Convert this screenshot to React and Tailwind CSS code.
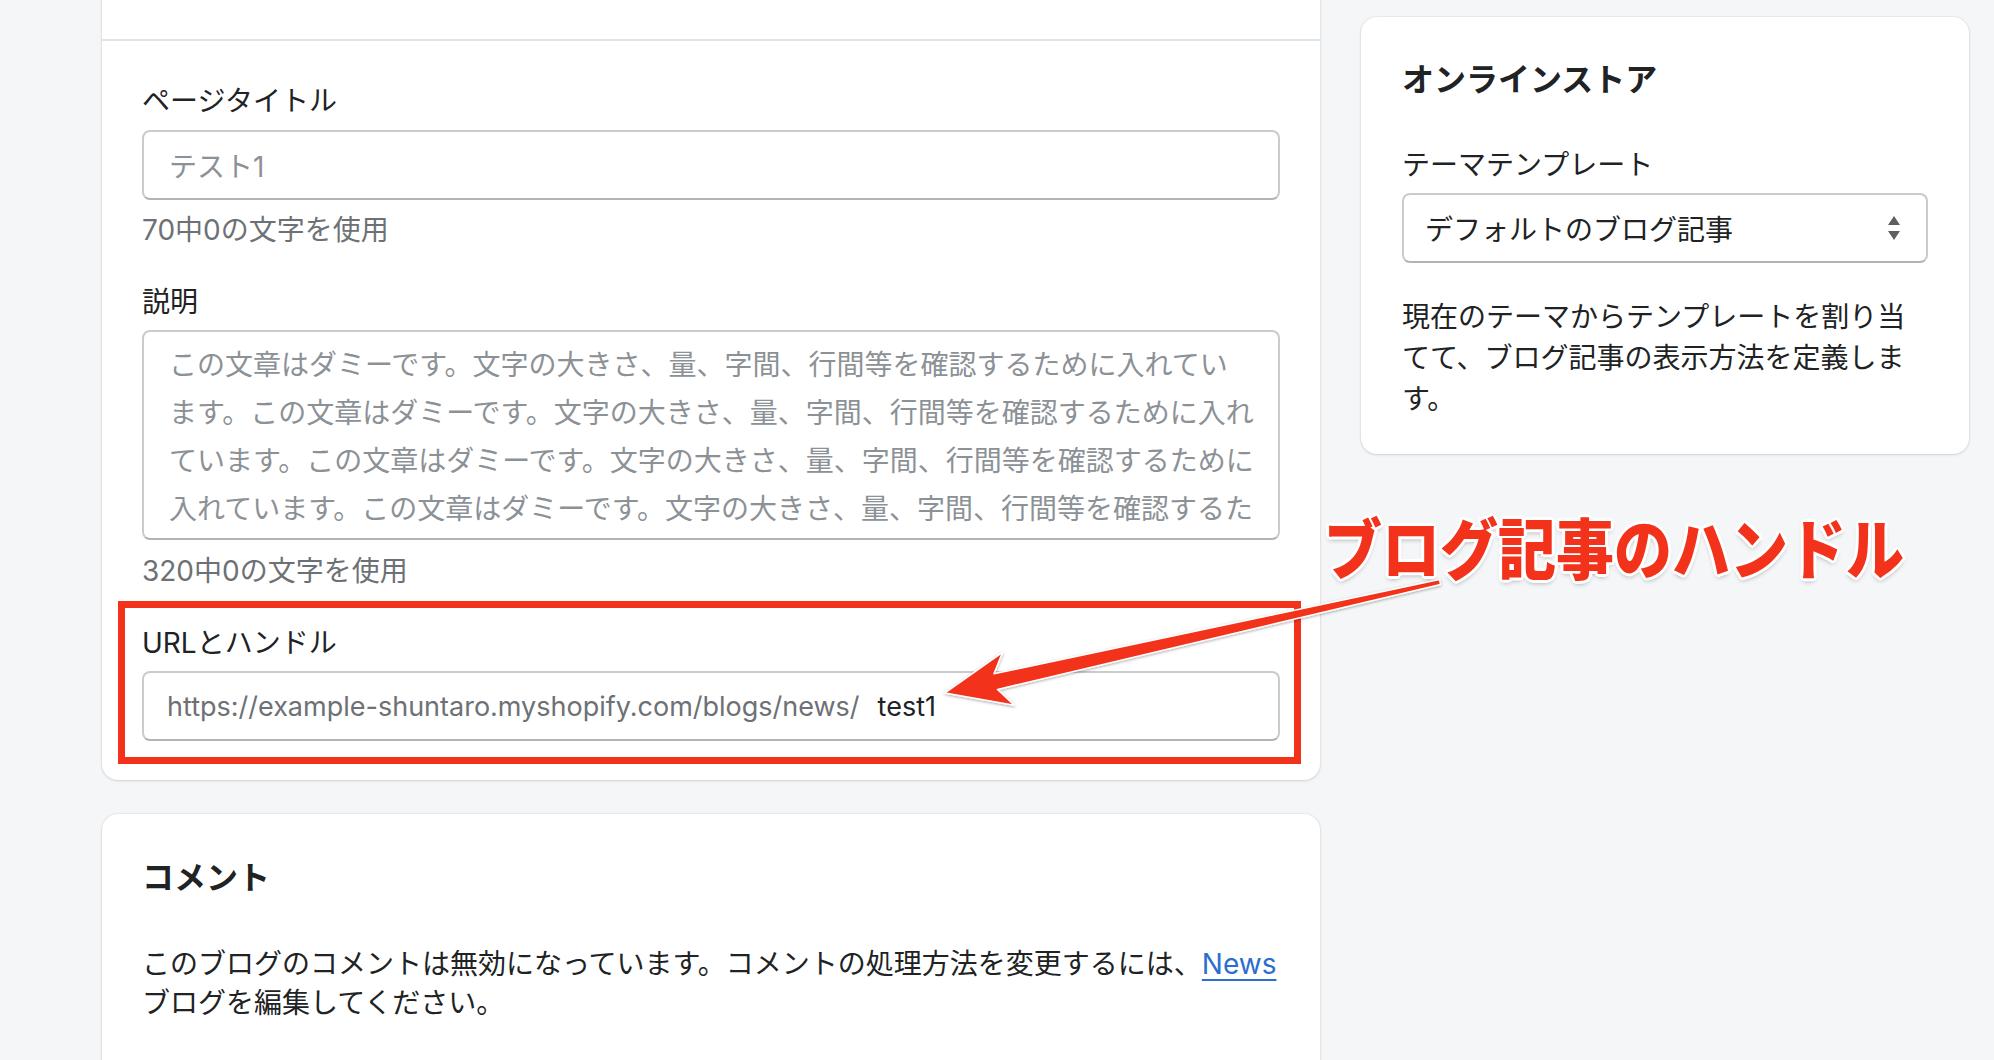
const font = "font-['Inter','Noto_Sans_CJK_JP',sans-serif]";

const dummy = [
  "この文章はダミーです。文字の大きさ、量、字間、行間等を確認するために入れてい",
  "ます。この文章はダミーです。文字の大きさ、量、字間、行間等を確認するために入れ",
  "ています。この文章はダミーです。文字の大きさ、量、字間、行間等を確認するために",
  "入れています。この文章はダミーです。文字の大きさ、量、字間、行間等を確認するた",
];

function Label({ children, className = "" }) {
  return (
    <div className={"h-[40px] text-[28px] leading-[45px] text-[#202223] whitespace-nowrap " + className}>
      {children}
    </div>
  );
}

function Help({ children, className = "" }) {
  return (
    <div className={"h-[40px] text-[28px] leading-[45px] text-[#6d7175] whitespace-nowrap " + className}>
      {children}
    </div>
  );
}

function Field({ children, className = "" }) {
  return (
    <div
      className={
        "rounded-[8px] border-2 border-[#c9cccf] border-b-[#aeb4b9] bg-white " + className
      }
    >
      {children}
    </div>
  );
}

function SelectArrows() {
  return (
    <svg width="14" height="26" viewBox="0 0 14 26">
      <path d="M7 1 L13 10 L1 10 Z" fill="#5c5f62" />
      <path d="M7 25 L13 16 L1 16 Z" fill="#5c5f62" />
    </svg>
  );
}

export default function App() {
  return (
    <div className={"relative h-[1060px] w-[1994px] overflow-hidden bg-[#f4f6f8] " + font}>
      <div className="flex gap-[41px] pl-[102px]">
        {/* left column */}
        <div className="flex w-[1218px] flex-col gap-[34px]">
          <div className="-mt-[24px] rounded-[16px] bg-white shadow-[0_0_0_1px_rgba(63,63,68,0.05),0_1px_3px_0_rgba(63,63,68,0.15)]">
            <div className="h-[65px] border-b-2 border-[#e1e3e5]" />
            <div className="relative px-[40px] pt-[38px] pb-[39px]">
              <Label>ページタイトル</Label>
              <Field className="mt-[11px] flex h-[70px] items-center pl-[25px] pt-[3px]">
                <span className="text-[28px] text-[#8c9196]">テスト1</span>
              </Field>
              <Help className="mt-[8px]">70中0の文字を使用</Help>

              <Label className="mt-[32px]">説明</Label>
              <Field className="mt-[10px] h-[210px] overflow-hidden pl-[25px] pt-[9px]">
                {dummy.map((line, i) => (
                  <div key={i} className="whitespace-nowrap text-[28px] leading-[48px] text-[#8c9196]">
                    {line}
                  </div>
                ))}
              </Field>
              <Help className="mt-[9px]">320中0の文字を使用</Help>

              <Label className="mt-[32px]">URLとハンドル</Label>
              <Field className="mt-[10px] flex h-[70px] items-center pl-[23px] pt-[3px]">
                <span className="whitespace-nowrap text-[27px] text-[#6d7175]">
                  https://example-shuntaro.myshopify.com/blogs/news/
                </span>
                <span className="ml-[18px] text-[27px] text-[#202223]">test1</span>
              </Field>

              {/* red highlight box */}
              <div className="absolute left-[16px] top-[560px] h-[163px] w-[1183px] border-[7px] border-[#f3321b]" />
            </div>
          </div>

          <div className="rounded-[16px] bg-white px-[40px] pt-[41px] pb-[60px] shadow-[0_0_0_1px_rgba(63,63,68,0.05),0_1px_3px_0_rgba(63,63,68,0.15)]">
            <div className="h-[44px] text-[32px] font-bold leading-[46px] text-[#202223]">コメント</div>
            <div className="mt-[46px] whitespace-nowrap text-[28px] leading-[39px] text-[#202223]">
              このブログのコメントは無効になっています。コメントの処理方法を変更するには、
              <a href="#" className="text-[#2c6ecb] underline underline-offset-[5px]">
                News
              </a>
              <br />
              ブログを編集してください。
            </div>
          </div>
        </div>

        {/* right column */}
        <div className="mt-[17px] h-fit w-[608px] rounded-[16px] bg-white px-[41px] pt-[40px] pb-[37px] shadow-[0_0_0_1px_rgba(63,63,68,0.05),0_1px_3px_0_rgba(63,63,68,0.15)]">
          <div className="h-[44px] text-[32px] font-bold leading-[46px] text-[#202223]">オンラインストア</div>
          <Label className="mt-[42px]">テーマテンプレート</Label>
          <Field className="mt-[10px] flex h-[70px] items-center justify-between pl-[21px] pr-[25px]">
            <span className="pt-[3px] text-[28px] text-[#202223]">デフォルトのブログ記事</span>
            <SelectArrows />
          </Field>
          <div className="mt-[34px] h-[120px] whitespace-nowrap text-[28px] leading-[41px] text-[#202223]">
            現在のテーマからテンプレートを割り当
            <br />
            てて、ブログ記事の表示方法を定義しま
            <br />
            す。
          </div>
        </div>
      </div>

      {/* annotation arrow */}
      <svg className="pointer-events-none absolute left-0 top-0" width="1994" height="1060">
        <defs>
          <filter id="sh" x="-10%" y="-10%" width="120%" height="130%">
            <feDropShadow dx="0" dy="1" stdDeviation="1.5" floodColor="#000" floodOpacity="0.35" />
          </filter>
        </defs>
        <polygon
          points="1439.5,579.6 994,673.8 1002.5,652.4 945,693 1014.3,705.2 997.5,689.4 1440.5,584.4"
          fill="#f3321b"
          stroke="#fff"
          strokeWidth="1.5"
          strokeLinejoin="round"
          filter="url(#sh)"
        />
      </svg>

      <div className="pointer-events-none absolute left-[1324px] top-[518px] origin-center scale-y-[1.14] whitespace-nowrap text-[58px] font-black leading-[64px] text-[#f3321b] [text-shadow:3px_0_0_#fff,-3px_0_0_#fff,0_3px_0_#fff,0_-3px_0_#fff,2px_2px_0_#fff,-2px_-2px_0_#fff,2px_-2px_0_#fff,-2px_2px_0_#fff,0_3px_5px_rgba(0,0,0,0.35)]">
        ブログ記事のハンドル
      </div>
    </div>
  );
}
